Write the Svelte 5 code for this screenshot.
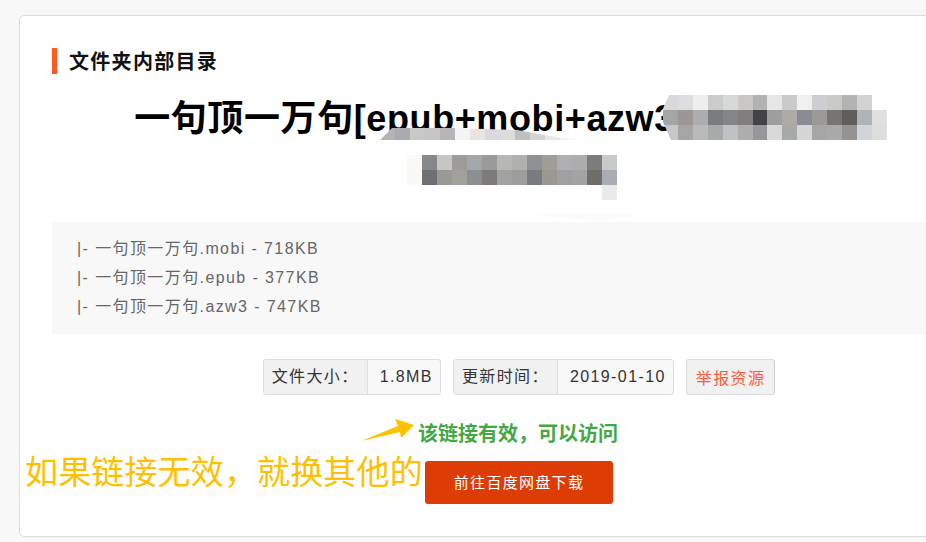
<script>
  const files = [
    { name: '一句顶一万句.mobi', size: '718KB' },
    { name: '一句顶一万句.epub', size: '377KB' },
    { name: '一句顶一万句.azw3', size: '747KB' }
  ];
  const mosaicA = [
    'd8d9da dcdde0 eeeeee ccccca d7d8da cac7c4 b2b2b2 e6e6e6 c9cacc f0f0ee cdced2 cbcac8 b2b4b3 d2d2d2 ffffff',
    'a5a5a5 9c9794 adadaf 7b7c7e 838586 817f7c 434244 9d9ea0 aeaaa6 898c92 9c9a97 767573 615d5b b1b4b7 e0e0e0',
    'c6c8c8 a7a4a5 b8bab9 a8a9ab c0c1c3 afaeaa 95979a d9d9d9 a7a8a8 d5d7d6 a6a6a6 a9a9a9 969294 d1d4d8 dedede'
  ].flatMap((r) => r.split(' '));
  const mosaicB = [
    'fbf9f7 87888b c8c6c2 9d9c9a a3a6aa 9d999b b7b7b3 b1b0ae 8e9194 a09d99 adb0b3 adadad 7c7c7e c8c9cb',
    'faf7f4 6f6f71 9b9996 a0a19d 8b8f92 7e7a79 a2a3a1 9d9d9b 787b80 9b9792 a0a0a0 a2a3a5 6f6d6a a9adb1',
    'ffffff ffffff ffffff ffffff ffffff ffffff ffffff ffffff ffffff ffffff ffffff ffffff ffffff eaeaea'
  ].flatMap((r) => r.split(' '));
  const mosaicC = 'b4b4b4 a8abb0 c8c8c8 c6c6c6 b5b5ba f4f4f4 e8e4e4 dadade dcdcdc c0c0c0 d2d2d0 e8e8e8 f4f4f4 fafafa'.split(' ');
</script>

<div class="card">
  <h2 class="section-title">文件夹内部目录</h2>

  <h1 class="title">
    一句顶一万句[epub+mobi+azw3<span class="gap-a"></span><br /><span class="gap-b"></span>
    <span class="mosaic mosaic-a">{#each mosaicA as c}<i style="background:#{c}"></i>{/each}</span>
    <span class="mosaic mosaic-b">{#each mosaicB as c}<i style="background:#{c}"></i>{/each}</span>
    <span class="mosaic mosaic-c">{#each mosaicC as c}<i style="background:#{c}"></i>{/each}</span>
    <span class="smear"></span>
  </h1>

  <ul class="files">
    {#each files as f}
      <li>|- {f.name} - {f.size}</li>
    {/each}
  </ul>

  <div class="info">
    <div class="pair"><span class="label">文件大小：</span><span class="value">1.8MB</span></div>
    <div class="pair"><span class="label">更新时间：</span><span class="value">2019-01-10</span></div>
    <button class="report">举报资源</button>
  </div>

  <div class="actions">
    <p class="valid">该链接有效，可以访问</p>
    <button class="download">前往百度网盘下载</button>
    <svg class="arrow" width="56" height="24" viewBox="0 0 56 24" aria-hidden="true">
      <polygon points="1,23 38,8 35,1 54,7 41,20 40,14" fill="#ffc000" />
    </svg>
    <span class="note">如果链接无效，就换其他的</span>
  </div>
</div>

<style>
  :global(body) {
    margin: 0;
    background: #f8f8f8;
    overflow: hidden;
    font-family: "Liberation Sans", "Noto Sans CJK SC", sans-serif;
  }
  .card {
    box-sizing: border-box;
    width: 1000px;
    height: 522px;
    margin: 15px 0 0 19px;
    padding: 32px 0 0 32px;
    background: #fff;
    border: 1px solid #ddd;
    border-radius: 5px;
    overflow: hidden;
  }
  .section-title {
    margin: 0;
    height: 26px;
    line-height: 28px;
    padding-left: 12px;
    border-left: 5px solid #ff5a1f;
    font-size: 20px;
    letter-spacing: 1.3px;
    font-weight: 700;
    color: #111;
  }
  .title {
    position: relative;
    width: 918px;
    height: 104px;
    margin: 18px 0 26px;
    padding-top: 1px;
    box-sizing: content-box;
    font-size: 36px;
    line-height: 52px;
    letter-spacing: 0.6px;
    font-weight: 700;
    color: #000;
    text-align: center;
  }
  .gap-a { display: inline-block; width: 213px; }
  .gap-b { display: inline-block; width: 210px; }
  .mosaic { position: absolute; display: grid; }
  .mosaic i { display: block; }
  .mosaic-a {
    left: 611px;
    top: 3px;
    grid-template-columns: repeat(15, 14.93px);
    grid-auto-rows: 15px;
    clip-path: polygon(6px 0, 100% 0, 100% 100%, 8px 100%, 0 60%, 0 30%);
  }
  .mosaic-b {
    left: 355px;
    top: 63px;
    grid-template-columns: repeat(14, 15px);
    grid-auto-rows: 15px;
  }
  .mosaic-c {
    left: 328px;
    top: 36px;
    grid-template-columns: repeat(14, 15px);
    grid-auto-rows: 12px;
    clip-path: polygon(12px 0, 72px 0, 137px 2px, 170px 8px, 200px 12px, 0 12px);
  }
  .smear {
    position: absolute;
    left: 475px;
    top: 122px;
    width: 108px;
    height: 8px;
    background: #fbfbfb;
    clip-path: polygon(0 0, 100% 10%, 70% 100%);
  }
  .files {
    list-style: none;
    box-sizing: border-box;
    height: 112px;
    margin: -1px 0 0;
    padding: 12px 0 0 25px;
    background: #f8f8f8;
  }
  .files li {
    height: 29px;
    line-height: 29px;
    font-size: 16px;
    letter-spacing: 1.4px;
    color: #666;
  }
  .info {
    display: flex;
    justify-content: center;
    gap: 12px;
    width: 934px;
    margin-top: 25px;
  }
  .pair {
    display: flex;
    height: 36px;
    box-sizing: border-box;
    border: 1px solid #ddd;
    border-radius: 3px;
    line-height: 34px;
    font-size: 16px;
    letter-spacing: 1.4px;
    color: #333;
    background: #f8f8f8;
  }
  .label {
    padding: 0 8px;
    background: #f1f1f1;
    border-right: 1px solid #ddd;
  }
  .value { padding: 0 7px 0 12px; }
  .report {
    height: 36px;
    box-sizing: border-box;
    padding: 0 9px;
    border: 1px solid #ddd;
    border-right-color: #ccc;
    border-radius: 3px;
    background: #f1f1f1;
    font: inherit;
    font-size: 16px;
    letter-spacing: 1.4px;
    color: #ff5a3c;
  }
  .actions {
    position: relative;
    display: flex;
    flex-direction: column;
    align-items: center;
    width: 934px;
    margin-top: 24px;
  }
  .valid {
    margin: 2px 2px 13px 0;
    height: 27px;
    line-height: 27px;
    font-size: 20px;
    font-weight: 700;
    color: #43a843;
  }
  .download {
    width: 188px;
    height: 43px;
    border: 0;
    border-radius: 3px;
    padding: 0 0 2px;
    background: #dd3c05;
    color: #fff;
    font: inherit;
    font-size: 15px;
    letter-spacing: 1.3px;
  }
  .arrow { position: absolute; left: 308px; top: -1px; }
  .note {
    position: absolute;
    left: -27px;
    top: 32px;
    font-size: 33px;
    letter-spacing: 0.15px;
    line-height: 44px;
    white-space: nowrap;
    color: #ffc000;
  }
</style>
